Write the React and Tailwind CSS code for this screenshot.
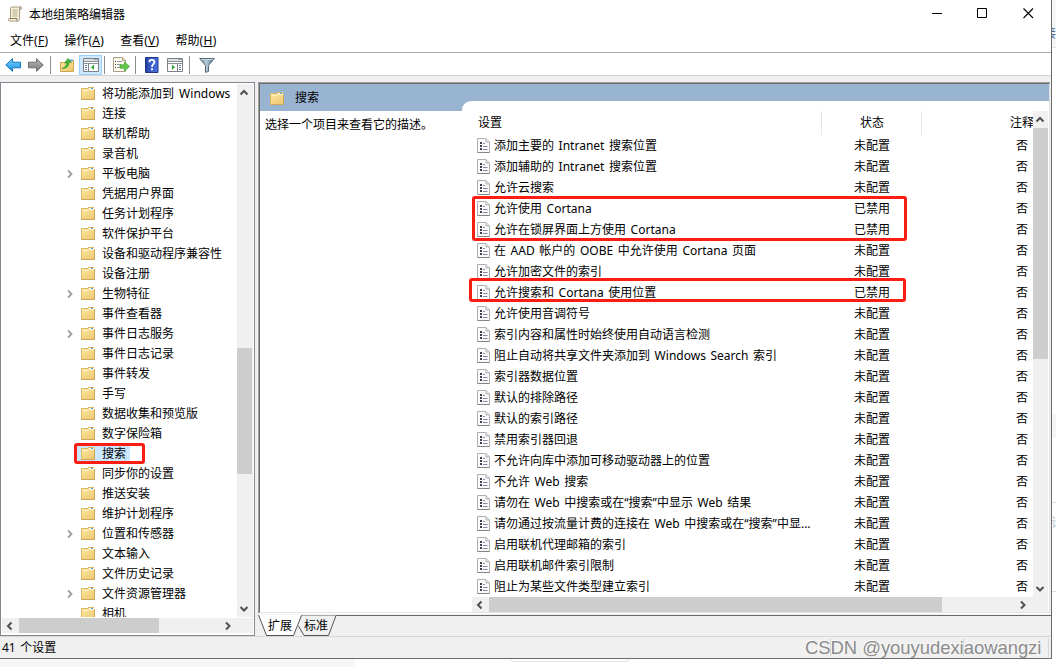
import React from "react";

const tree = [
  ["将功能添加到 Windows"],
  ["连接"],
  ["联机帮助"],
  ["录音机"],
  ["平板电脑", true],
  ["凭据用户界面"],
  ["任务计划程序"],
  ["软件保护平台"],
  ["设备和驱动程序兼容性"],
  ["设备注册"],
  ["生物特征", true],
  ["事件查看器"],
  ["事件日志服务", true],
  ["事件日志记录"],
  ["事件转发"],
  ["手写"],
  ["数据收集和预览版"],
  ["数字保险箱"],
  ["搜索"],
  ["同步你的设置"],
  ["推送安装"],
  ["维护计划程序"],
  ["位置和传感器", true],
  ["文本输入"],
  ["文件历史记录"],
  ["文件资源管理器", true],
  ["相机"],
];

const settings = [
  ["添加主要的 Intranet 搜索位置", "未配置"],
  ["添加辅助的 Intranet 搜索位置", "未配置"],
  ["允许云搜索", "未配置"],
  ["允许使用 Cortana", "已禁用"],
  ["允许在锁屏界面上方使用 Cortana", "已禁用"],
  ["在 AAD 帐户的 OOBE 中允许使用 Cortana 页面", "未配置"],
  ["允许加密文件的索引", "未配置"],
  ["允许搜索和 Cortana 使用位置", "已禁用"],
  ["允许使用音调符号", "未配置"],
  ["索引内容和属性时始终使用自动语言检测", "未配置"],
  ["阻止自动将共享文件夹添加到 Windows Search 索引", "未配置"],
  ["索引器数据位置", "未配置"],
  ["默认的排除路径", "未配置"],
  ["默认的索引路径", "未配置"],
  ["禁用索引器回退", "未配置"],
  ["不允许向库中添加可移动驱动器上的位置", "未配置"],
  ["不允许 Web 搜索", "未配置"],
  ["请勿在 Web 中搜索或在“搜索”中显示 Web 结果", "未配置"],
  ["请勿通过按流量计费的连接在 Web 中搜索或在“搜索”中显...", "未配置"],
  ["启用联机代理邮箱的索引", "未配置"],
  ["启用联机邮件索引限制", "未配置"],
  ["阻止为某些文件类型建立索引", "未配置"],
];

const menus = [
  ["文件", "F"],
  ["操作", "A"],
  ["查看", "V"],
  ["帮助", "H"],
];

function Defs() {
  return (
    <svg width="0" height="0" className="absolute">
      <defs>
        <linearGradient id="folder" x1="0" y1="0" x2="0.6" y2="1">
          <stop offset="0" stopColor="#ffe9a6" />
          <stop offset="1" stopColor="#eecb74" />
        </linearGradient>
        <linearGradient id="blue" x1="0" y1="0" x2="0" y2="1">
          <stop offset="0" stopColor="#7ad0fb" />
          <stop offset="1" stopColor="#1593e4" />
        </linearGradient>
        <linearGradient id="gray" x1="0" y1="0" x2="0" y2="1">
          <stop offset="0" stopColor="#b5b5b5" />
          <stop offset="1" stopColor="#7b7b7b" />
        </linearGradient>
        <linearGradient id="help" x1="0" y1="0" x2="1" y2="0">
          <stop offset="0" stopColor="#22388f" />
          <stop offset="0.3" stopColor="#3558c4" />
          <stop offset="1" stopColor="#4a70d8" />
        </linearGradient>
        <linearGradient id="funnel" x1="0" y1="0" x2="1" y2="0">
          <stop offset="0" stopColor="#5f7587" />
          <stop offset="0.45" stopColor="#b9cbd8" />
          <stop offset="1" stopColor="#4c6375" />
        </linearGradient>
      </defs>
    </svg>
  );
}

function Folder() {
  return (
    <svg width="16" height="16" viewBox="0 0 16 16" className="block shrink-0">
      <path d="M1 3h7V2h6v2h1v11H1z" fill="url(#folder)" />
      <path d="M1.500 14.500v-11H8M8 2.500h1" fill="none" stroke="#dcb964" />
      <path d="M8 2h6v1H8z" fill="#d9b766" />
      <path d="M9 3h5v1H9z" fill="#f7fafc" />
      <path d="M11 3h2v1h-2z" fill="#4da3e0" />
      <path d="M2 5.500h6l1-1h5" fill="none" stroke="#fff1c0" />
      <path d="M1 14.500h14M14.500 4v10" stroke="#cda659" fill="none" />
    </svg>
  );
}

function Policy() {
  return (
    <svg width="13" height="15" viewBox="0 0 13 15" className="block shrink-0">
      <path d="M.5.5h8.500l3.500 3.500v10.500h-12z" fill="#fbfbfb" stroke="#b0b0b0" />
      <path d="M9 .5V4h3.500" fill="#e2e2e2" stroke="#b5b5b5" />
      <path d="M.5 14.500h12" stroke="#858585" />
      <path d="M3 4h2v2H3zM3 7h2v2H3zM3 10h2v2H3z" fill="#3a3f4a" />
      <path d="M6 5.500h2M6 8.500h4.500M6 11.500h4.500" stroke="#8583a8" />
    </svg>
  );
}

function Chevron({ d, light }) {
  const paths = {
    up: "M1.500 6.500 5 3l3.500 3.500",
    down: "M1.500 3 5 6.500 8.500 3",
    left: "M6.500 1.500 3 5l3.500 3.500",
    right: "M3 1.500 6.500 5 3 8.500",
  };
  return (
    <svg width="10" height="10" viewBox="0 0 10 10" className="block shrink-0">
      <path d={paths[d]} fill="none" stroke={light ? "#a0a0a0" : "#505050"} strokeWidth={light ? 1.8 : 2} />
    </svg>
  );
}

function Sep({ className }) {
  return <div className={"h-[18px] w-px bg-[#8d8d8d] " + className} />;
}

function PanelIcon({ flip }) {
  return (
    <svg width="16" height="14" viewBox="0 0 16 14" className="block">
      <path d="M.5.5h15v13H.5z" fill="#fff" stroke="#7d8288" />
      <path d="M1 1h14v2H1z" fill="#dde1e6" />
      <path d="M1 3.500h14M1 5.500h14" stroke="#8c9299" />
      <path d="M11.500 1.500h1M13.500 1.500h1" stroke="#555" />
      {flip ? (
        <g>
          <path d="M10.500 6v7" stroke="#7d8288" />
          <path d="M12 7.500h2M12 9.500h2M12 11.500h2" stroke="#5f7fa8" />
          <path d="M5 6.500 8 9.300 5 12z" fill="#35a535" />
        </g>
      ) : (
        <g>
          <path d="M5.500 6v7" stroke="#7d8288" />
          <path d="M2 7.500h2M2 9.500h2M2 11.500h2" stroke="#5f7fa8" />
          <path d="M11 6.500 8 9.300l3 2.700z" fill="#35a535" />
        </g>
      )}
    </svg>
  );
}

function Toolbar() {
  return (
    <div className="flex h-[23px] items-center border-b border-[#d5d5d5] bg-white pl-[5px] pt-[2px]">
      <svg width="16" height="16" viewBox="0 0 16 16" className="block">
        <path d="M.8 8 7.500 1.700v3.500h8v5.600h-8v3.500z" fill="url(#blue)" stroke="#1777bd" />
      </svg>
      <svg width="16" height="16" viewBox="0 0 16 16" className="ml-[7px] block">
        <path d="M15.200 8 8.500 1.700v3.500h-8v5.600h8v3.500z" fill="url(#gray)" stroke="#6d6d6d" />
      </svg>
      <Sep className="ml-[6px]" />
      <svg width="16" height="16" viewBox="0 0 16 16" className="ml-[8px] block">
        <path d="M1.500 5.500h6l1-2h6v11h-13z" fill="url(#folder)" stroke="#cda64c" />
        <path d="M10.500 2.500h3.500v1.500h-3.500z" fill="#4da3e0" />
        <path d="M3 11.500c3-1 4.500-3 4.700-5.500H5.500L9 1.500 12.500 5.500H10c0 4-2.500 6.200-7 6z" fill="#46b535" stroke="#2f8f25" strokeWidth=".6" />
      </svg>
      <div className="ml-[4px] flex h-[20px] w-[23px] items-center justify-center border border-[#99d1ff] bg-[#cce8ff]">
        <PanelIcon />
      </div>
      <Sep className="ml-[2px]" />
      <svg width="17" height="16" viewBox="0 0 17 16" className="ml-[8px] block">
        <path d="M.5.5h9l3 3v11H.5z" fill="#fdfbf0" stroke="#a89f83" />
        <path d="M9.500.5v3h3" fill="#e8e2cc" stroke="#a89f83" />
        <path d="M2 4.500h1M2 7.500h1M2 10.500h1" stroke="#444" />
        <path d="M4 4.500h5M4 7.500h4M4 10.500h4" stroke="#9a97b5" />
        <path d="M7 7.800h4.500V5l5 4.500-5 4.500v-2.800H7z" fill="#62c84c" stroke="#3da32d" strokeWidth=".7" />
      </svg>
      <Sep className="ml-[5px]" />
      <svg width="14" height="16" viewBox="0 0 14 16" className="ml-[9px] block">
        <path d="M.5.5h12.500v15H.5z" fill="url(#help)" stroke="#22368a" />
        <path d="M4.300 5.200c0-3 5-3 5 0 0 2-2.300 2-2.300 4.800M7 11.300v1.900" fill="none" stroke="#fff" strokeWidth="1.800" />
      </svg>
      <div className="ml-[8px]">
        <PanelIcon flip />
      </div>
      <Sep className="ml-[6px]" />
      <svg width="16" height="16" viewBox="0 0 16 16" className="ml-[9px] block">
        <path d="M.7 1.500h14.600L9.500 8.500v6l-3 .8V8.500z" fill="url(#funnel)" stroke="#536a7b" />
        <path d="M2 2.500h12" stroke="#cfdde7" />
      </svg>
    </div>
  );
}

function TreePane() {
  return (
    <div className="flex h-[554px] w-[255px] flex-col border border-[#828790] bg-white">
      <div className="flex h-[534px]">
        <div className="w-[236px] overflow-hidden">
          {tree.map(([name, expandable]) => (
            <div key={name} className="flex h-5 items-center whitespace-nowrap pl-[64px]">
              <div className="w-[10px] pt-px">{expandable && <Chevron d="right" light />}</div>
              <div className={"ml-[2px] flex h-4 items-center pl-[3px] pr-[4px] " + (name === "搜索" ? "bg-[#cce8ff]" : "")}>
                <Folder />
                <span className="ml-[6px] pt-[2px] [word-spacing:2px]">{name}</span>
              </div>
            </div>
          ))}
        </div>
        <div className="mt-px flex w-4 flex-col bg-[#f0f0f0]">
          <div className="flex h-[17px] items-center pl-[2px]">
            <Chevron d="up" />
          </div>
          <div className="mt-[247px] h-[126px] w-[15px] bg-[#cdcdcd]" />
          <div className="mt-auto flex h-[17px] items-center pl-[2px]">
            <Chevron d="down" />
          </div>
        </div>
      </div>
      <div className="mx-px mt-px flex h-[15px] items-center bg-[#f0f0f0]">
        <div className="flex w-[17px] pl-[3px]">
          <Chevron d="left" />
        </div>
        <div className="h-[15px] w-[140px] bg-[#cdcdcd]" />
        <div className="ml-auto mr-[15px] flex w-[17px] pl-[2px]">
          <Chevron d="right" />
        </div>
      </div>
    </div>
  );
}

function DetailPane() {
  return (
    <div className="flex h-[532px] w-[792px] flex-col border-b border-l border-t border-[#a0a0a0] border-b-white bg-white">
      <div className="flex min-h-0 flex-1 flex-col border border-[#696969] border-b-[#e3e3e3] border-r-[#e3e3e3]">
        <div className="flex h-[27px] bg-[#99b4d1]">
          <div className="flex w-[202px] items-center pl-[9px]">
            <Folder />
            <span className="ml-[10px] pt-px">搜索</span>
          </div>
          <div className="mt-[17px] flex-1 rounded-tl-[9px] bg-white" />
        </div>
        <div className="flex h-[501px]">
          <div className="w-[212px] pl-[5px] pt-[4px] leading-5">选择一个项目来查看它的描述。</div>
          <div className="flex flex-1 flex-col">
            <div className="flex h-[486px]">
              <div className="w-[561px] overflow-hidden">
                <div className="flex h-6 whitespace-nowrap leading-6">
                  <div className="w-[350px] shrink-0 border-r border-[#e5e5e5] pl-[6px]">设置</div>
                  <div className="w-[100px] shrink-0 border-r border-[#e5e5e5] pl-px text-center">状态</div>
                  <div className="w-[88px] shrink-0" />
                  <div className="shrink-0">注释</div>
                </div>
                {settings.map(([name, state]) => (
                  <div key={name} className="flex h-[21px] items-center whitespace-nowrap">
                    <div className="flex w-[350px] items-center pl-[5px]">
                      <Policy />
                      <span className="ml-[4px]">{name}</span>
                    </div>
                    <div className="w-[100px] text-center">{state}</div>
                    <div className="ml-[94px]">否</div>
                  </div>
                ))}
              </div>
              <div className="flex w-[15px] flex-col bg-[#f0f0f0]">
                <div className="flex h-[17px] items-center pl-[2px]">
                  <Chevron d="up" />
                </div>
                <div className="h-[231px] w-[15px] bg-[#cdcdcd]" />
                <div className="mt-auto flex h-[17px] items-center pl-[2px]">
                  <Chevron d="down" />
                </div>
              </div>
            </div>
            <div className="flex h-[15px] w-[576px] items-center bg-[#f0f0f0]">
              <div className="flex w-[17px] pl-[3px]">
                <Chevron d="left" />
              </div>
              <div className="h-[15px] w-[453px] bg-[#cdcdcd]" />
              <div className="ml-auto mr-[15px] flex w-[17px] pl-[2px]">
                <Chevron d="right" />
              </div>
            </div>
          </div>
        </div>
      </div>
    </div>
  );
}

function ViewTabs() {
  return (
    <div className="relative h-[21px]">
      <svg width="793" height="21" viewBox="0 0 793 21" className="absolute left-0 top-0">
        <path d="M43 0.500H793" stroke="#696969" />
        <path d="M43.500.500H78L70.500 20.500H46L40.500 11z" fill="#f0f0f0" />
        <path d="M78 .5 70.500 20.500H46L40.500 11" fill="none" stroke="#555" />
        <path d="M0 0H43L35.500 20.500H8.500z" fill="#fff" />
        <path d="M.5 0 8.500 20.500H35.500L43.500 .5" fill="none" stroke="#555" />
      </svg>
      <div className="relative flex pl-[10px] pt-px leading-5">
        <span>扩展</span>
        <span className="ml-[12px]">标准</span>
      </div>
    </div>
  );
}

function TitleBar() {
  return (
    <div className="flex h-[27px] items-center bg-white pl-[7px]">
      <svg width="16" height="16" viewBox="0 0 16 16" className="block">
        <path d="M4.500 1h9c1.500 0 1.500 2.500 0 2.500h-1v9c0 2-1 2.500-2 2.500H2.500c-1.500 0-1.500-2.500 0-2.500h1V3C3.500 2 3.500 1 4.500 1z" fill="#f8f1d8" stroke="#9a8f72" strokeWidth=".9" />
        <path d="M13.500 1c-1 .3-1 2.500 0 2.500M2.500 12.500H10c-.6 1 0 2.500.8 2.500" fill="none" stroke="#776c50" strokeWidth=".9" />
        <path d="M5.500 4h5M5.500 6h5M5.500 8h5M5.500 10h5" stroke="#a79f88" strokeWidth=".9" />
      </svg>
      <span className="ml-[6px] pt-[2px]">本地组策略编辑器</span>
      <div className="ml-auto mr-[17px] flex items-center gap-[35px]">
        <svg width="11" height="11" viewBox="0 0 11 11"><path d="M1 5.500h10" stroke="#000" /></svg>
        <svg width="11" height="11" viewBox="0 0 11 11"><path d="M.5.5h9v9h-9z" fill="none" stroke="#000" /></svg>
        <svg width="11" height="11" viewBox="0 0 11 11"><path d="m.5.5 9.500 9.500m0-9.500-9.500 9.500" stroke="#000" strokeWidth="1.100" /></svg>
      </div>
    </div>
  );
}

function Backdrop() {
  return (
    <div className="w-1 overflow-hidden">
      <div className="h-[48px] border-b border-[#e4e4e6] bg-[#f5f6f7] pt-[26px] text-[#4d6a9a]">
        <span className="-ml-[8px] block w-3">接</span>
      </div>
      <div className="mt-[366px] h-[24px] bg-[#f5f6f7]" />
      <div className="mt-[64px] h-px bg-[#dfe0e4]" />
      <div className="h-[88px] pt-[12px] text-[#b9c3d8]">
        <span className="-ml-px block w-3">论</span>
      </div>
      <div className="h-px bg-[#dfe0e4]" />
    </div>
  );
}

export default function App() {
  return (
    <div className="relative h-[667px] w-[1056px] overflow-hidden bg-white text-[12px] leading-4 text-black [font-family:'Noto_Sans','Noto_Sans_CJK_SC',sans-serif] [word-spacing:1.500px]">
      <Defs />
      <div className="flex h-[659px]">
        <div className="flex w-[1052px] flex-col border-b border-r border-[#6b6b6b] bg-[#f0f0f0]">
          <TitleBar />
          <div className="flex h-[26px] items-center gap-[16px] border-b border-[#a9a9a9] bg-white pl-[10px] pt-[3px]">
            {menus.map(([label, key]) => (
              <span key={key}>
                {label}
                <span className="tracking-[0.3px]">
                  (<u>{key}</u>)
                </span>
              </span>
            ))}
          </div>
          <Toolbar />
          <div className="mt-[6px] flex h-[554px] gap-[3px]">
            <TreePane />
            <div className="flex flex-col">
              <DetailPane />
              <div className="mt-px">
                <ViewTabs />
              </div>
            </div>
          </div>
          <div className="flex h-[22px] items-center border-t border-[#d7d7d7] pl-[2px]">
            <span>41 个设置</span>
            <div className="ml-auto mr-[2px] flex h-[19px]">
              <div className="w-px bg-[#d7d7d7]" />
              <div className="ml-[132px] w-px bg-[#d7d7d7]" />
              <div className="ml-[84px] w-px bg-[#d7d7d7]" />
            </div>
          </div>
        </div>
        <Backdrop />
      </div>
      <div className="flex h-2 overflow-hidden">
        <div className="w-[355px] bg-[#f5f6f7]" />
        <div className="ml-[155px] h-[3px] w-[119px] rounded-b border border-t-0 border-[#e4e4e8]" />
      </div>

      <div className="absolute left-[472px] top-[196px] h-[45px] w-[435px] rounded-[3px] border-[3px] border-[#fb1d12]" />
      <div className="absolute left-[469px] top-[278px] h-[24px] w-[437px] rounded-[3px] border-[3px] border-[#fb1d12]" />
      <div className="absolute left-[74px] top-[443px] h-[21px] w-[71px] rounded-[3px] border-[3px] border-[#fb1d12]" />
      <div className="absolute left-[805px] top-[637px] whitespace-nowrap text-[18.4px] leading-[22px] text-[#8c8c8c] [font-family:'Liberation_Sans',sans-serif] [text-shadow:-1px_-1px_0_#fafafa] [word-spacing:0]">
        CSDN @youyudexiaowangzi
      </div>
    </div>
  );
}
